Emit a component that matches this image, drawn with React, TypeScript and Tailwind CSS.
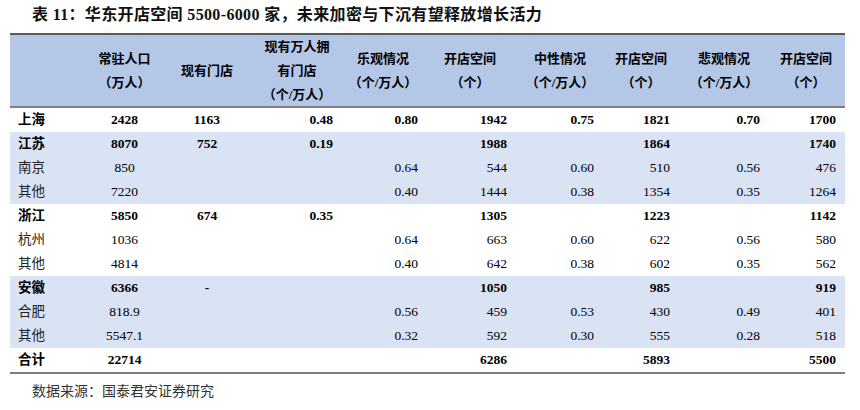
import React from "react"

const FONT = "font-['Liberation_Serif','Noto_Sans_CJK_SC',serif]"

// column grid shared by header and body rows
const GRID = "grid grid-cols-[74px_81px_84px_96px_76px_98px_82px_80px_86px_78px]"

// per-column alignment for body cells
const cellCls = [
  "pl-2 text-left",
  "text-center",
  "text-center",
  "pr-[12px] text-right",
  "pr-[3px] text-right",
  "pr-[12px] text-right",
  "pr-[7px] text-right",
  "pr-[11px] text-right",
  "pr-[7px] text-right",
  "pr-[9px] text-right",
]

const headers: string[][] = [
  [],
  ["常驻人口", "（万人）"],
  ["现有门店"],
  ["现有万人拥", "有门店", "（个/万人）"],
  ["乐观情况", "（个/万人）"],
  ["开店空间", "（个）"],
  ["中性情况", "（个/万人）"],
  ["开店空间", "（个）"],
  ["悲观情况", "（个/万人）"],
  ["开店空间", "（个）"],
]

type Row = { cells: string[]; bold: boolean; blue: boolean }

const rows: Row[] = [
  { cells: ["上海", "2428", "1163", "0.48", "0.80", "1942", "0.75", "1821", "0.70", "1700"], bold: true, blue: false },
  { cells: ["江苏", "8070", "752", "0.19", "", "1988", "", "1864", "", "1740"], bold: true, blue: true },
  { cells: ["南京", "850", "", "", "0.64", "544", "0.60", "510", "0.56", "476"], bold: false, blue: true },
  { cells: ["其他", "7220", "", "", "0.40", "1444", "0.38", "1354", "0.35", "1264"], bold: false, blue: true },
  { cells: ["浙江", "5850", "674", "0.35", "", "1305", "", "1223", "", "1142"], bold: true, blue: false },
  { cells: ["杭州", "1036", "", "", "0.64", "663", "0.60", "622", "0.56", "580"], bold: false, blue: false },
  { cells: ["其他", "4814", "", "", "0.40", "642", "0.38", "602", "0.35", "562"], bold: false, blue: false },
  { cells: ["安徽", "6366", "-", "", "", "1050", "", "985", "", "919"], bold: true, blue: true },
  { cells: ["合肥", "818.9", "", "", "0.56", "459", "0.53", "430", "0.49", "401"], bold: false, blue: true },
  { cells: ["其他", "5547.1", "", "", "0.32", "592", "0.30", "555", "0.28", "518"], bold: false, blue: true },
  { cells: ["合计", "22714", "", "", "", "6286", "", "5893", "", "5500"], bold: true, blue: false },
]

export default function App() {
  return (
    <div className={`w-[860px] h-[410px] bg-white text-black ${FONT}`}>
      {/* title */}
      <div className="pt-[5px] pl-[32px] text-[16px] leading-[20px] font-bold tracking-[0.35px] text-[#111]">
        表 11：华东开店空间 5500-6000 家，未来加密与下沉有望释放增长活力
      </div>

      {/* table */}
      <div className="mt-[8px] ml-[10px] w-[835px] border-t-2 border-b-2 border-t-[#595959] border-b-[#7f7f7f]">
        <div className={`${GRID} h-[73px] bg-[#b4c7e7] border-b-2 border-[#7f7f7f]`}>
          {headers.map((lines, i) => (
            <div key={i} className="flex flex-col items-center justify-center text-[13px] leading-[24px] font-bold">
              {lines.map((l, j) => (
                <span key={j}>{l}</span>
              ))}
            </div>
          ))}
        </div>

        {rows.map((r, i) => (
          <div
            key={i}
            className={`${GRID} h-[24px] items-center text-[13.5px] leading-[24px] ${r.blue ? "bg-[#dae3f3]" : "bg-white"} ${r.bold ? "font-bold" : "font-normal"}`}
          >
            {r.cells.map((c, j) => (
              <div key={j} className={`${cellCls[j]} ${j === 0 && !r.bold ? "text-[#222]" : ""}`}>
                {c}
              </div>
            ))}
          </div>
        ))}
      </div>

      {/* source */}
      <div className="mt-[8px] pl-[32px] text-[14px] leading-[20px] text-[#333]">
        数据来源：国泰君安证券研究
      </div>
    </div>
  )
}
